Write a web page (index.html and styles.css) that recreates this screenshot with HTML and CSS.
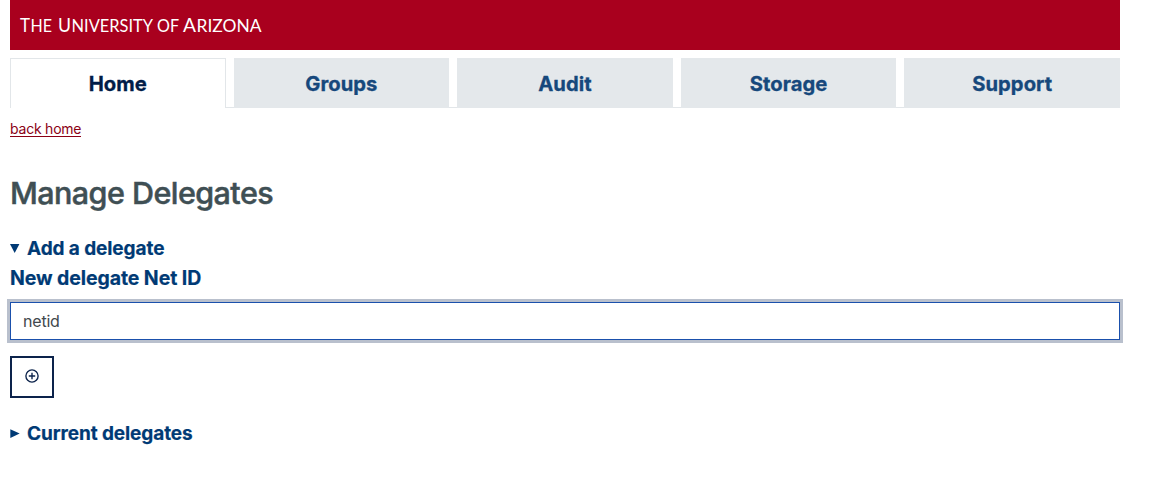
FILE: index.html
```html
<!DOCTYPE html>
<html lang="en">
<head>
<meta charset="utf-8">
<title>Manage Delegates</title>
<link rel="stylesheet" href="styles.css">
</head>
<body>
<header class="banner">
  <svg class="wordmark" width="242" height="26" viewBox="0 0 242 26" role="img" aria-label="The University of Arizona">
    <text y="19.5" class="wordmark-text"><tspan class="cap" x="0" textLength="10" lengthAdjust="spacingAndGlyphs">T</tspan><tspan x="10.5" textLength="21.5" lengthAdjust="spacingAndGlyphs">HE</tspan><tspan class="cap" x="38" textLength="13" lengthAdjust="spacingAndGlyphs">U</tspan><tspan x="51.5" textLength="81.5" lengthAdjust="spacingAndGlyphs">NIVERSITY</tspan><tspan x="137" textLength="22" lengthAdjust="spacingAndGlyphs">OF</tspan><tspan class="cap" x="163" textLength="13" lengthAdjust="spacingAndGlyphs">A</tspan><tspan x="176.5" textLength="65" lengthAdjust="spacingAndGlyphs">RIZONA</tspan></text>
  </svg>
</header>
<nav class="tabs">
  <a class="tab active">Home</a>
  <a class="tab">Groups</a>
  <a class="tab">Audit</a>
  <a class="tab">Storage</a>
  <a class="tab">Support</a>
</nav>
<main>
  <div class="crumb"><a class="back">back home</a></div>
  <h1 class="title">Manage Delegates</h1>
  <div class="summary"><svg class="marker" width="10" height="10"><path d="M0 1h9.4L4.7 10z"/></svg><span>Add a delegate</span></div>
  <label class="label" for="netid">New delegate Net ID</label>
  <div class="field-ring"><input class="field" id="netid" type="text" value="netid"></div>
  <button class="add-button" aria-label="Add">
    <svg class="plus" width="14" height="14" viewBox="0 0 14 14"><circle cx="7" cy="7" r="6.1"/><path d="M7 3.8v6.4M3.8 7h6.4"/></svg>
  </button>
  <div class="summary current"><svg class="marker" width="10" height="10"><path d="M0.3 1.2v8.8L9.7 5.6z"/></svg><span>Current delegates</span></div>
</main>
</body>
</html>
```
FILE: styles.css
```css
* { box-sizing: border-box; }
body {
  margin: 0;
  padding: 0 38px 0 7px;
  background: #fff;
  font-family: Inter, "Liberation Sans", sans-serif;
  color: #403635;
}
.banner {
  height: 50px;
  margin: 0 3px;
  padding: 12px 10px;
  background: #a9001e;
}
.wordmark { display: block; overflow: visible; }
.wordmark-text { font-family: Lato, sans-serif; font-size: 17px; fill: #fff; }
.cap { font-size: 20px; }
.tabs {
  display: grid;
  grid-template-columns: repeat(5, 1fr);
  gap: 8px;
  height: 50px;
  margin: 8px 3px 0;
  border-bottom: 1px solid #e2e6e9;
}
.tab {
  height: 50px;
  background: #e4e8eb;
  color: #16487c;
  font-size: 20.2px;
  font-weight: 700;
  line-height: 51px;
  letter-spacing: 0.05px;
  text-align: center;
  -webkit-text-stroke: 0.3px currentColor;
}
.tab.active {
  background: #fff;
  color: #001c48;
  border: 1px solid #e2e6e9;
  border-bottom: 0;
  line-height: 49px;
}
.crumb { height: 28px; padding: 13px 3px 0; font-size: 14px; line-height: 16px; letter-spacing: -0.22px; }
.back { display: inline-block; color: #8b0015; border-bottom: 1px solid #8b0015; height: 16px; }
.title {
  margin: 36px 3px 0;
  height: 42px;
  font-size: 30.5px;
  font-weight: 500;
  line-height: 42px;
  letter-spacing: -0.55px;
  color: #3f4f54;
  -webkit-text-stroke: 0.5px currentColor;
}
.summary {
  display: flex;
  align-items: center;
  gap: 7px;
  height: 30px;
  margin: 19px 3px 0;
  font-size: 19px;
  font-weight: 700;
  letter-spacing: -0.09px;
  color: #003a75;
  -webkit-text-stroke: 0.2px currentColor;
}
.marker { fill: #003a75; }
.label {
  display: block;
  height: 30px;
  margin: 0 3px;
  font-size: 19.5px;
  font-weight: 700;
  line-height: 31px;
  letter-spacing: -0.09px;
  color: #003a75;
  -webkit-text-stroke: 0.2px currentColor;
}
.field-ring {
  margin-top: 6px;
  border: 3px solid #b9c0cd;
}
.field {
  display: block;
  width: 100%;
  height: 38px;
  padding: 0 12px;
  border: 1px solid #1a50ac;
  border-radius: 0;
  outline: none;
  background: #fff;
  color: #42484d;
  font: 16px Inter, sans-serif;
  letter-spacing: -0.2px;
}
.add-button {
  display: flex;
  align-items: center;
  justify-content: center;
  width: 44px;
  height: 42px;
  margin: 13px 3px 0;
  padding: 0 0 2px;
  border: 2px solid #0c234b;
  background: #fff;
}
.plus { fill: none; stroke: #0c234b; stroke-width: 1.35; }
.current { margin-top: 20px; }
```
